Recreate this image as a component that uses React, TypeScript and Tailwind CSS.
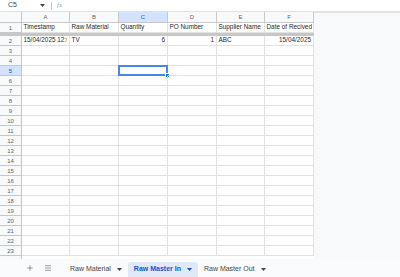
import { Menu, Plus } from 'lucide-react'

type Col = { letter: string; width: string }

const columns: Col[] = [
  { letter: 'A', width: 'w-[48px]' },
  { letter: 'B', width: 'w-[49px]' },
  { letter: 'C', width: 'w-[49px]' },
  { letter: 'D', width: 'w-[49px]' },
  { letter: 'E', width: 'w-[48px]' },
  { letter: 'F', width: 'w-[49px]' },
]

type Cell = { text: string; right?: boolean; clip?: boolean }

const headerRow: Cell[] = [
  { text: 'Timestamp' },
  { text: 'Raw Material' },
  { text: 'Quantity' },
  { text: 'PO Number' },
  { text: 'Supplier Name' },
  { text: 'Date of Recived' },
]

const dataRows: Record<number, Cell[]> = {
  2: [
    { text: '15/04/2025 12:00:00', clip: true },
    { text: 'TV' },
    { text: '6', right: true },
    { text: '1', right: true },
    { text: 'ABC' },
    { text: '15/04/2025', right: true },
  ],
}

const selectedRow = 5
const selectedCol = 2

function Caret({ className = '' }: { className?: string }) {
  return (
    <svg className={`shrink-0 ${className}`} width="5" height="3" viewBox="0 0 5 3">
      <path d="M0 0h5L2.5 3z" fill="currentColor" />
    </svg>
  )
}

function SheetRow({ num, cells }: { num: number; cells?: Cell[] }) {
  const active = num === selectedRow
  return (
    <div className="flex h-[10px]">
      <div
        className={`flex w-[22px] items-center justify-center border-r border-b border-[#c7c7c7] text-[6px] leading-none ${
          active ? 'bg-[#d3e3fd] text-[#0b57d0]' : 'bg-[#f8f9fa] text-[#5f6368]'
        }`}
      >
        {num}
      </div>
      {columns.map((col, i) => {
        const cell = cells?.[i]
        const selected = active && i === selectedCol
        return (
          <div
            key={col.letter}
            className={`relative flex items-center border-r border-b border-[#e2e2e2] pr-[2px] pl-[1.5px] text-[6.4px] leading-none text-[#1f1f1f] ${col.width} ${
              cell?.right ? 'justify-end' : ''
            }`}
          >
            {cell && (
              <span className={`whitespace-nowrap ${cell.clip ? 'block w-full overflow-hidden' : ''}`}>{cell.text}</span>
            )}
            {selected && (
              <>
                <span className="absolute -top-px -left-px h-[11px] w-[50px] border-2 border-[#4a86e8]" />
                <span className="absolute -right-[3px] -bottom-[3px] h-[5px] w-[5px] border border-white bg-[#1a73e8]" />
              </>
            )}
          </div>
        )
      })}
    </div>
  )
}

export default function App() {
  const rows = Array.from({ length: 22 }, (_, i) => i + 2)

  return (
    <div className="flex h-[277px] w-[400px] flex-col overflow-hidden bg-white font-['Liberation_Sans',Arial,sans-serif]">
      <div className="flex h-[12px] shrink-0 items-center border-b border-[#e1e3e1] text-[7px] text-[#444746]">
        <span className="w-[40px] pl-[8px]">C5</span>
        <Caret className="text-[#444746]" />
        <span className="ml-[6px] h-[8px] w-px bg-[#c4c7c5]" />
        <span className="ml-[5px] font-['Liberation_Serif',serif] text-[7px] italic text-[#9aa0a6]">fx</span>
      </div>

      <div className="flex min-h-0 flex-1">
        <div className="flex w-[314px] shrink-0 flex-col">
          <div className="flex h-[11px]">
            <div className="w-[22px] border-r border-b border-[#c7c7c7] bg-[#f8f9fa]" />
            {columns.map((col, i) => (
              <div
                key={col.letter}
                className={`flex items-center justify-center border-r border-b border-[#c7c7c7] text-[6px] leading-none ${col.width} ${
                  i === selectedCol ? 'bg-[#d3e3fd] text-[#0b57d0]' : 'bg-[#f8f9fa] text-[#5f6368]'
                }`}
              >
                {col.letter}
              </div>
            ))}
          </div>
          <SheetRow num={1} cells={headerRow} />
          <div className="h-[3px] bg-[#c7c7c7]" />
          {rows.map((n) => (
            <SheetRow key={n} num={n} cells={dataRows[n]} />
          ))}
          <div className="flex flex-1">
            <div className="w-[22px] border-r border-[#c7c7c7] bg-[#f8f9fa]" />
          </div>
        </div>
        <div className="flex-1 border-t border-[#e2e2e2] bg-[#f8f9fa]" />
      </div>

      <div className="flex h-[18px] shrink-0 items-end bg-[#f9fbfd] text-[7px] text-[#444746]">
        <div className="flex h-full items-center pl-[26px]">
          <Plus size={8} strokeWidth={1.6} />
          <Menu size={8} strokeWidth={1.6} className="ml-[10px]" />
        </div>
        <div className="ml-[12px] flex h-[15px] items-center gap-[6px] px-[6px]">
          <span>Raw Material</span>
          <Caret />
        </div>
        <div className="flex h-[15px] items-center gap-[6px] rounded-t-[3px] bg-[#e1e9f7] px-[6px] font-semibold text-[#0b57d0]">
          <span>Raw Master In</span>
          <Caret />
        </div>
        <div className="flex h-[15px] items-center gap-[6px] px-[6px]">
          <span>Raw Master Out</span>
          <Caret />
        </div>
      </div>
    </div>
  )
}
